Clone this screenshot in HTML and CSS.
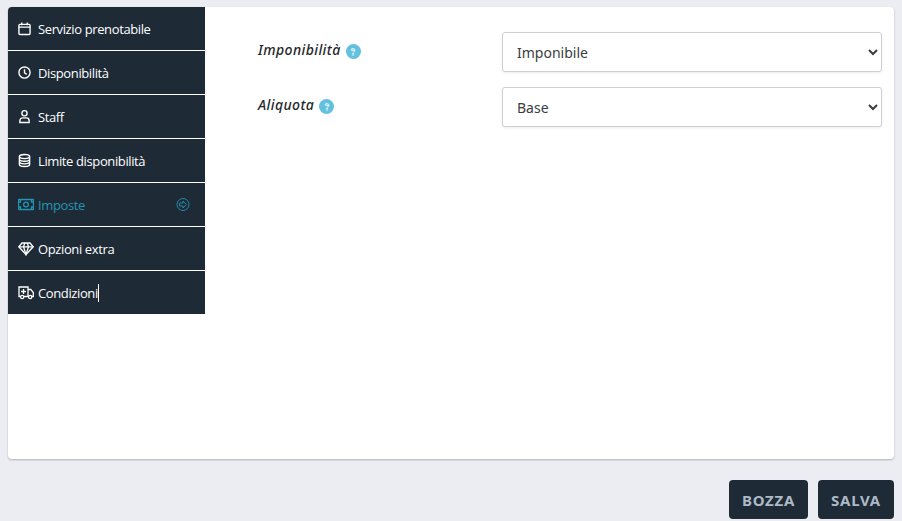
FILE: index.html
```html
<!DOCTYPE html>
<html lang="en">
<head>
    <meta charset="UTF-8">
    <meta name="viewport" content="width=device-width, initial-scale=1.0">
    <title>Imposte</title>
    <link rel="stylesheet" href="styles.css">
</head>
<body>
    <div class="card">
        <ul class="menu">
            <li class="menu-item">
                <svg class="icon" viewBox="0 0 14 14"><rect x="1" y="2.5" width="12" height="11" rx="1"/><path d="M1 5.5h12M4 .5v3M10 .5v3"/></svg>
                <span>Servizio prenotabile</span>
            </li>
            <li class="menu-item">
                <svg class="icon" viewBox="0 0 14 14"><circle cx="7" cy="7" r="6"/><path d="M7 3.5V7.5L9.5 9"/></svg>
                <span>Disponibilità</span>
            </li>
            <li class="menu-item">
                <svg class="icon" viewBox="0 0 14 14"><circle cx="7" cy="3.5" r="2.8"/><path d="M2 13.5v-2a3 3 0 0 1 3-3h4a3 3 0 0 1 3 3v2z"/></svg>
                <span>Staff</span>
            </li>
            <li class="menu-item">
                <svg class="icon" viewBox="0 0 14 14"><ellipse cx="7" cy="2.8" rx="5.5" ry="2.2"/><path d="M1.5 2.8v8.4c0 1.2 2.5 2.2 5.5 2.2s5.5-1 5.5-2.2V2.8M1.5 5.6c0 1.2 2.5 2.2 5.5 2.2s5.5-1 5.5-2.2M1.5 8.4c0 1.2 2.5 2.2 5.5 2.2s5.5-1 5.5-2.2"/></svg>
                <span>Limite disponibilità</span>
            </li>
            <li class="menu-item active">
                <svg class="icon icon-wide" viewBox="0 0 16 12"><rect x=".5" y="1" width="15" height="10" rx=".5"/><circle cx="8" cy="6" r="2.4"/><path d="M.5 3.5h2v-2.500M15.500 3.500h-2v-2.500M.5 8.500h2v2.500M15.500 8.500h-2v2.500"/></svg>
                <span>Imposte</span>
                <svg class="icon arrow" viewBox="0 0 14 14"><circle cx="7" cy="7" r="6"/><path d="M3.500 5.500h3.500v-2l3.500 3.500-3.500 3.500v-2H3.500z"/></svg>
            </li>
            <li class="menu-item">
                <svg class="icon icon-wide" viewBox="0 0 16 14"><path d="M4 1.500h8l3.200 3.800L8 13 .8 5.300z"/><path d="M.8 5.300h14.400M5.500 5.300 8 13l2.500-7.700M5.500 5.300 6.800 1.500M10.500 5.300 9.200 1.500"/></svg>
                <span>Opzioni extra</span>
            </li>
            <li class="menu-item">
                <svg class="icon icon-wide" viewBox="0 0 16 14"><path d="M2.500 11H1V1.500h9V11H6"/><path d="M10 4h2.800L15.300 7v4H14M10 11h.5"/><path d="M5.500 3.500v5M3 6h5"/><circle cx="4.200" cy="11.500" r="1.600"/><circle cx="12.200" cy="11.500" r="1.600"/></svg>
                <span class="caret">Condizioni</span>
            </li>
        </ul>
        <div class="form">
            <div class="form-row">
                <label class="form-label">Imponibilità
                    <span class="hint"><svg viewBox="0 0 16 16"><path d="M5.500 6a2.500 2.500 0 1 1 5 0c0 1.400-1.500 1.700-2.500 2.200M6.300 5.800h3.400M6.500 10h3M6.500 12h3"/></svg></span>
                </label>
                <select class="form-select">
                    <option>Imponibile</option>
                </select>
            </div>
            <div class="form-row">
                <label class="form-label">Aliquota
                    <span class="hint"><svg viewBox="0 0 16 16"><path d="M5.500 6a2.500 2.500 0 1 1 5 0c0 1.400-1.500 1.700-2.500 2.200M6.300 5.800h3.400M6.500 10h3M6.500 12h3"/></svg></span>
                </label>
                <select class="form-select">
                    <option>Base</option>
                </select>
            </div>
        </div>
    </div>
    <div class="actions">
        <button class="btn btn-draft">BOZZA</button>
        <button class="btn btn-save">SALVA</button>
    </div>
</body>
</html>
```

FILE: styles.css
```css
body {
    margin: 0;
    padding: 7px 8px 0;
    background-color: #ecedf2;
    font-family: "Noto Sans", Arial, sans-serif;
}

.card {
    display: flex;
    align-items: flex-start;
    height: 452px;
    background-color: #fff;
    border-radius: 4px;
    box-shadow: 0 1px 2px rgba(0, 0, 0, 0.25);
    overflow: hidden;
}

/* Side menu */
.menu {
    width: 197px;
    margin: 0;
    padding: 0;
    list-style: none;
    flex-shrink: 0;
}

.menu-item {
    display: flex;
    align-items: center;
    height: 43px;
    padding: 0 15px 0 10px;
    background-color: #1e2a35;
    border-bottom: 1px solid #fff;
    color: #fff;
    font-family: "Open Sans", Arial, sans-serif;
    font-size: 13px;
    font-weight: 500;
    letter-spacing: -0.38px;
}

.menu-item:last-child {
    border-bottom: none;
}

.menu-item.active {
    color: #2196b3;
}

.icon {
    width: 13px;
    height: 15px;
    margin-right: 7px;
    fill: none;
    stroke: currentColor;
    stroke-width: 1.5;
    flex-shrink: 0;
}

.icon-wide {
    width: 16px;
    margin-right: 4px;
    stroke-width: 1.3;
}

.arrow {
    width: 14px;
    margin-left: auto;
    margin-right: 0;
    stroke-width: 0.9;
}

.caret {
    border-right: 1px solid #fff;
    line-height: 18px;
}

/* Form */
.form {
    flex: 1;
    padding: 25px 12px 0 53px;
    display: flex;
    flex-direction: column;
    gap: 15px;
}

.form-row {
    display: flex;
    justify-content: space-between;
    align-items: flex-start;
}

.form-label {
    display: flex;
    align-items: center;
    gap: 5px;
    height: 35px;
    color: #26282b;
    font-size: 14px;
    font-style: italic;
    font-weight: 500;
    letter-spacing: 0.4px;
}

.hint {
    display: flex;
    align-items: center;
    justify-content: center;
    width: 15px;
    height: 15px;
    margin-top: 4px;
    border-radius: 50%;
    background-color: #63c0de;
}

.hint svg {
    width: 12px;
    height: 12px;
    fill: none;
    stroke: #d5eff7;
    stroke-width: 1.5;
}

.form-select {
    width: 380px;
    height: 40px;
    padding: 0 10px;
    background-color: #fff;
    border: 1px solid #cfcfcf;
    border-radius: 3px;
    box-shadow: 0 1px 3px rgba(0, 0, 0, 0.08);
    color: #3a3d40;
    font-family: "Noto Sans", Arial, sans-serif;
    font-size: 14px;
}

/* Bottom buttons */
.actions {
    display: flex;
    justify-content: flex-end;
    gap: 10px;
    margin-top: 21px;
}

.btn {
    height: 39px;
    padding: 0;
    border: none;
    border-radius: 4px;
    background-color: #1e2a35;
    color: #adbac6;
    font-family: "Noto Sans", Arial, sans-serif;
    font-size: 15px;
    font-weight: 700;
    letter-spacing: 0.7px;
}

.btn-draft {
    width: 79px;
}

.btn-save {
    width: 76px;
}
```
